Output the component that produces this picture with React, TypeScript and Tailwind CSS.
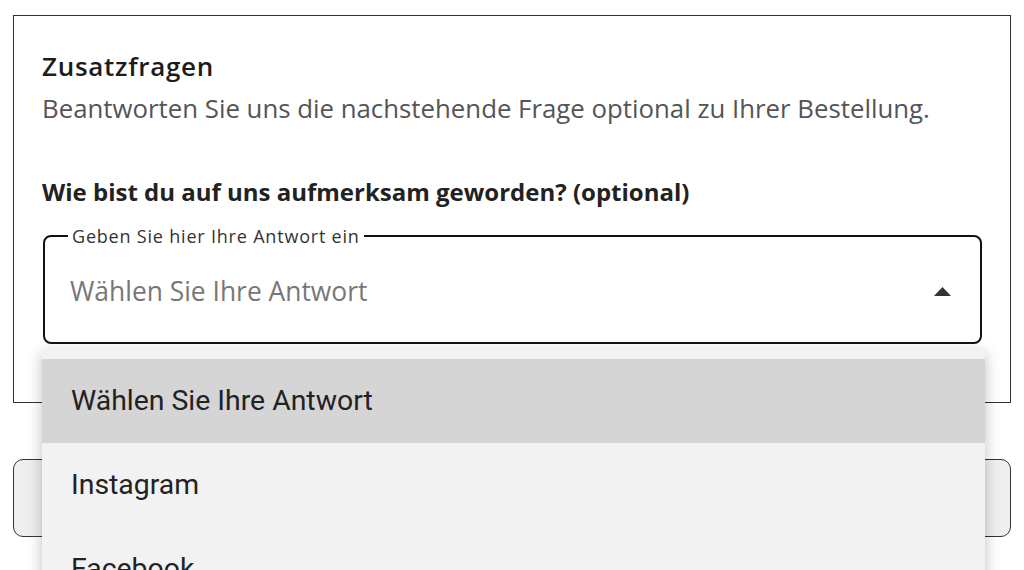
import React from "react";

const options = ["Wählen Sie Ihre Antwort", "Instagram", "Facebook"];

const App = () => {
  return (
    <div
      className="relative h-[570px] overflow-hidden bg-white px-[13px] pt-[15px]"
      style={{ fontFamily: '"Open Sans", "Noto Sans", sans-serif' }}
    >
      {/* Zusatzfragen card */}
      <section className="h-[388px] border border-[#333] px-[28px] pt-[34px]">
        <h2 className="text-[26px] leading-[32px] font-semibold tracking-[0.7px] text-[#1c1c1c]">
          Zusatzfragen
        </h2>
        <p className="mt-[11px] text-[25.8px] leading-[30px] text-[#555]">
          Beantworten Sie uns die nachstehende Frage optional zu Ihrer Bestellung.
        </p>
        <label className="mt-[55px] block text-[24px] leading-[28px] font-bold text-[#222]">
          Wie bist du auf uns aufmerksam geworden? (optional)
        </label>
        <fieldset className="mt-[21px] ml-[1px] rounded-lg border-2 border-[#111] px-[25px]">
          <legend className="-ml-[2px] px-[4px] text-[18px] leading-[18px] tracking-[0.8px] text-[#333]">
            Geben Sie hier Ihre Antwort ein
          </legend>
          <div className="flex h-[97px] items-center justify-between pb-[4px]">
            <span className="text-[26.4px] text-[#777]">Wählen Sie Ihre Antwort</span>
            <svg width="17" height="9" viewBox="0 0 17 9" className="mr-[4px]">
              <path d="M0 9 L8.5 0 L17 9 Z" fill="#333" />
            </svg>
          </div>
        </fieldset>
      </section>

      {/* button behind the menu */}
      <button className="mt-[56px] h-[78px] w-full rounded-[10px] border-[1.5px] border-[#333] bg-[#efefef]" />

      {/* open select menu */}
      <ul
        className="absolute top-[349px] left-[42px] w-[943px] bg-[#f2f2f2] pt-[10px] shadow-[0_4px_14px_rgba(0,0,0,0.25)]"
        style={{ fontFamily: 'Roboto, "Liberation Sans", sans-serif' }}
      >
        {options.map((option, index) => (
          <li
            key={option}
            className={`flex h-[84px] items-center px-[29px] text-[28.4px] text-[#222] ${
              index === 0 ? "bg-[#d5d5d5]" : ""
            }`}
          >
            {option}
          </li>
        ))}
      </ul>
    </div>
  );
};

export default App;
